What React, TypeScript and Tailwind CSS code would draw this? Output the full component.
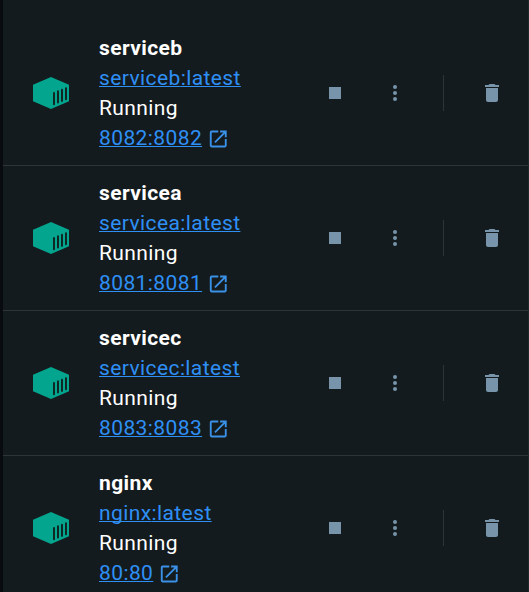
const services = [
  { name: 'serviceb', port: '8082:8082' },
  { name: 'servicea', port: '8081:8081' },
  { name: 'servicec', port: '8083:8083' },
  { name: 'nginx', port: '80:80' },
];

function ContainerIcon() {
  return (
    <svg className="h-8 w-9 shrink-0" viewBox="0 0 36 32">
      <path fill="#03a58e" d="M18 0 36 7.7V24.3L18 32 0 24.3V7.7Z" />
      <path
        stroke="#10211f"
        strokeWidth="1.9"
        strokeLinecap="round"
        d="M21 16V27.2M25 14.3V25.5M29 12.7V23.9M33 11.1V22.3"
      />
    </svg>
  );
}

function OpenIcon() {
  return (
    <svg className="ml-[5px] size-[22.5px] translate-y-[0.75px]" viewBox="0 0 24 24" fill="#3a92e8">
      <path d="M19 19H5V5h7V3H5c-1.11 0-2 .9-2 2v14c0 1.1.89 2 2 2h14c1.1 0 2-.9 2-2v-7h-2v7zM14 3v2h3.59l-9.83 9.83 1.41 1.41L19 6.41V10h2V3h-7z" />
    </svg>
  );
}

function Service({ name, port }: { name: string; port: string }) {
  return (
    <div className="flex h-[145px] shrink-0 items-center border-b border-[#2f3436] pl-[30px]">
      <ContainerIcon />
      <div className="ml-[30px] w-[230px] shrink-0 text-[21px] leading-[30px] tracking-[0.4px] text-white">
        <div className="font-bold">{name}</div>
        <div>
          <a className="text-[#2e8ff5] underline decoration-1 [text-decoration-skip-ink:none]">{name}:latest</a>
        </div>
        <div>Running</div>
        <div className="flex h-[30px] items-center">
          <a className="text-[#2e8ff5] underline decoration-1">{port}</a>
          <OpenIcon />
        </div>
      </div>
      <div className="size-3 shrink-0 bg-[#7794ab]" />
      <div className="ml-[52px] flex shrink-0 flex-col gap-0.5">
        <i className="size-1 rounded-full bg-[#7794ab]" />
        <i className="size-1 rounded-full bg-[#7794ab]" />
        <i className="size-1 rounded-full bg-[#7794ab]" />
      </div>
      <div className="ml-[46px] h-9 w-px shrink-0 bg-[#2f3436]" />
      <svg className="ml-9 size-6 shrink-0" viewBox="0 0 24 24" fill="#7794ab">
        <path d="M6 19c0 1.1.9 2 2 2h8c1.1 0 2-.9 2-2V7H6v12zM19 4h-3.5l-1-1h-5l-1 1H5v2h14V4z" />
      </svg>
    </div>
  );
}

export default function App() {
  return (
    <main className="h-[592px] w-[529px] overflow-hidden border-r border-l-3 border-l-[#080b0f] border-r-[#1d282e] bg-[#141b1e] pt-[21px] font-[Roboto,sans-serif]">
      {services.map((s) => (
        <Service key={s.name} {...s} />
      ))}
    </main>
  );
}
